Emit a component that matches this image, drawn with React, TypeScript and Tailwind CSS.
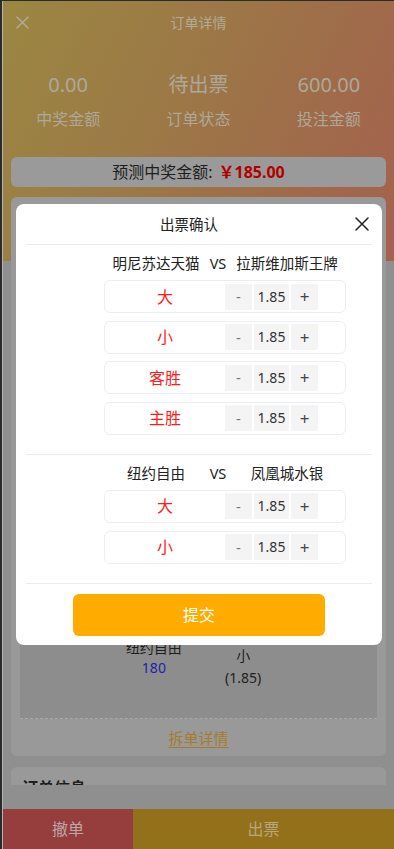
import React from "react";

function CloseIcon({ size = 14, color = "#222", sw = 1.6 }: { size?: number; color?: string; sw?: number }) {
  return (
    <svg width={size} height={size} viewBox="0 0 14 14" fill="none">
      <path d="M1 1L13 13M13 1L1 13" stroke={color} strokeWidth={sw} strokeLinecap="round" />
    </svg>
  );
}

function BetRow({ label }: { label: string }) {
  return (
    <div className="h-[33px] flex items-center border border-[#ebeef5] rounded-[6px] pr-[27px]">
      <div className="flex-1 text-center text-[16px] leading-[20px] text-[#ff1a1a]">{label}</div>
      <div className="flex gap-[2px]">
        <div className="w-[27px] h-[26px] bg-[#f4f4f5] flex items-center justify-center text-[#777] text-[15px] leading-none">-</div>
        <div className="w-[35px] h-[26px] bg-[#f4f4f5] flex items-center justify-center text-[#333] text-[14px] leading-none">1.85</div>
        <div className="w-[27px] h-[26px] bg-[#f4f4f5] flex items-center justify-center text-[#444] text-[17px] leading-none">+</div>
      </div>
    </div>
  );
}

function MatchSection({ home, away, bets }: { home: string; away: string; bets: string[] }) {
  return (
    <div className="mx-[10px] border-b border-[#ebebeb] pt-[8px] pb-[19px]">
      <div className="ml-[78px] w-[242px]">
        <div className="flex h-[20px] items-center text-[14.5px] leading-[20px] text-[#222]">
          <div className="w-[104px] text-center whitespace-nowrap">{home}</div>
          <div className="w-[20px] text-center">VS</div>
          <div className="w-[118px] text-center whitespace-nowrap">{away}</div>
        </div>
        <div className="mt-[7px] flex flex-col gap-[7.67px]">
          {bets.map((b, i) => (
            <BetRow key={i} label={b} />
          ))}
        </div>
      </div>
    </div>
  );
}

export default function App() {
  return (
    <div className="w-[394px] h-[849px] bg-[#2b2b2b] pl-[2px] pt-[1px] overflow-hidden font-['Noto_Sans','Noto_Sans_CJK_SC',sans-serif]">
      <div className="relative h-full border-l border-[#b5b5b5] flex flex-col bg-[#8f8f8f] bg-[linear-gradient(115deg,#9b8742_0%,#9c7946_40%,#9f6c4a_70%,#a5614f_100%)] bg-no-repeat bg-[length:100%_260px]">
        {/* scroll area */}
        <div className="flex-1 min-h-0 overflow-hidden">
          {/* top bar */}
          <div className="h-[43px] grid grid-cols-[1fr_auto_1fr] items-center">
            <div className="pl-[13px] flex items-center">
              <CloseIcon size={13} color="#b3aa95" sw={1.6} />
            </div>
            <div className="text-[14px] leading-[20px] text-[#b3aa98]">订单详情</div>
            <div />
          </div>
          {/* stats */}
          <div className="pt-[27px] grid grid-cols-3 text-center">
            {[
              ["0.00", "中奖金额"],
              ["待出票", "订单状态"],
              ["600.00", "投注金额"],
            ].map(([v, l]) => (
              <div key={l} className="flex flex-col items-center">
                <div className="text-[20px] leading-[28px] text-[#aea898]">{v}</div>
                <div className="mt-[8px] text-[16px] leading-[24px] text-[#aea898]">{l}</div>
              </div>
            ))}
          </div>
          {/* predicted */}
          <div className="mt-[26px] mx-[8px] h-[30px] rounded-[6px] bg-[#9a9a9a] flex items-center justify-center">
            <span className="text-[16px] leading-[22px] text-[#1e1e1e]">预测中奖金额:</span>
            <span className="ml-[6px] text-[16px] leading-[22px] font-bold text-[#b20000]">￥185.00</span>
          </div>
          {/* card 2 */}
          <div className="mt-[10px] mx-[8px] rounded-[6px] bg-[#999999] pt-[9px] px-[9px]">
            <div className="h-[513px] bg-[#8d8d8d] border-b border-dashed border-[#a8a8a8] flex flex-col justify-between">
              <div className="grid grid-cols-4 pt-[16px] text-[14px] leading-[20px] text-[#1e1e1e] text-center">
                <div>场次</div>
                <div>主队</div>
                <div>投注</div>
                <div>结果</div>
              </div>
              <div className="grid grid-cols-4 items-start pb-[29px] text-[14px] text-center">
                <div />
                <div className="flex flex-col items-center">
                  <div className="leading-[20px] text-[#1e1e1e]">纽约自由</div>
                  <div className="leading-[20px] text-[#2222a8]">180</div>
                </div>
                <div className="pt-[7px] flex flex-col items-center">
                  <div className="leading-[22px] text-[#1e1e1e]">小</div>
                  <div className="leading-[22px] text-[#1e1e1e]">(1.85)</div>
                </div>
                <div />
              </div>
            </div>
            <div className="h-[37px] flex items-center justify-center">
              <span className="text-[15px] leading-[20px] text-[#a67c2a] underline underline-offset-[3px]">拆单详情</span>
            </div>
          </div>
          {/* card 3 */}
          <div className="mt-[11px] mx-[8px] rounded-[6px] bg-[#999999] pt-[9px] px-[11px] h-[120px]">
            <div className="text-[16px] leading-[24px] font-bold text-[#1e1e1e]">订单信息</div>
          </div>
        </div>
        {/* footer */}
        <div className="h-[64px] pt-[24px]">
          <div className="h-[40px] flex">
            <div className="w-[130px] bg-[#963e3e] flex items-center justify-center text-[16px] text-[#bea6a6]">撤单</div>
            <div className="flex-1 bg-[#93711b] flex items-center justify-center text-[16px] text-[#b9a67c]">出票</div>
          </div>
        </div>

        {/* modal */}
        <div className="absolute left-[13px] top-[203px] w-[366px] bg-white rounded-[8px]">
          <div className="h-[41px] mx-[10px] border-b border-[#ebebeb] flex items-center">
            <div className="flex-1 text-center text-[14.5px] leading-[20px] text-[#222]">出票确认</div>
            <div className="w-[20px] flex items-center justify-end pr-[3px]">
              <CloseIcon size={14} color="#222" sw={1.5} />
            </div>
          </div>
          <MatchSection home="明尼苏达天猫" away="拉斯维加斯王牌" bets={["大", "小", "客胜", "主胜"]} />
          <MatchSection home="纽约自由" away="凤凰城水银" bets={["大", "小"]} />
          <div className="pt-[10px] pb-[9px] flex justify-center">
            <div className="w-[252px] h-[42px] rounded-[6px] bg-[#ffab00] flex items-center justify-center text-white text-[16px]">提交</div>
          </div>
        </div>
      </div>
    </div>
  );
}
